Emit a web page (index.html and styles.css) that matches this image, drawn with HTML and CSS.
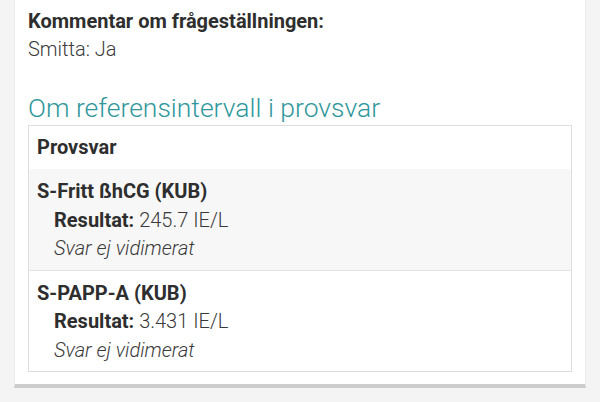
FILE: index.html
```html
<!DOCTYPE html>
<html lang="sv">
<head>
  <meta charset="UTF-8">
  <title>Provsvar</title>
  <link rel="stylesheet" href="styles.css">
</head>
<body>

  <div class="kort">
    <div class="kommentar">
      <div class="rubrik">Kommentar om frågeställningen:</div>
      <div class="text">Smitta: Ja</div>
    </div>

    <h2>Om referensintervall i provsvar</h2>

    <div class="tabell">
      <div class="huvud">Provsvar</div>

      <div class="rad udda">
        <div class="namn">S-Fritt ßhCG (KUB)</div>
        <div class="varde"><b>Resultat:</b> 245.7 IE/L</div>
        <div class="status">Svar ej vidimerat</div>
      </div>

      <div class="rad">
        <div class="namn">S-PAPP-A (KUB)</div>
        <div class="varde"><b>Resultat:</b> 3.431 IE/L</div>
        <div class="status">Svar ej vidimerat</div>
      </div>
    </div>
  </div>

</body>
</html>
```

FILE: styles.css
```css
body {
  font-family: Roboto, 'Noto Sans', sans-serif;
  background: #f4f4f4;
  margin: 0;
  padding: 0;
  color: #333;
}

.kort {
  margin: 0 14px;
  background-color: #ffffff;
  padding: 7px 13px 12px 13px;
  border-left: 1px solid #ececec;
  border-right: 1px solid #ececec;
  border-bottom: 4px solid #cdcdcd;
}

.kommentar {
  font-size: 20px;
  line-height: 28px;
}

.rubrik {
  font-weight: 700;
  color: #2e2e2e;
}

.text {
  font-weight: 300;
  color: #3a3a3a;
}

h2 {
  margin: 28px 0 1px 0;
  font-size: 26.5px;
  line-height: 33px;
  font-weight: 300;
  color: #2f979c;
}

.tabell {
  border: 1px solid #dedede;
  font-size: 20px;
  line-height: 28.5px;
}

.huvud {
  padding: 7px 8px 8px 8px;
  line-height: 28px;
  font-weight: 700;
  color: #2e2e2e;
}

.rad {
  padding: 8px 8px 7px 8px;
}

.udda {
  background-color: #f7f7f7;
  border-bottom: 1px solid #e2e2e2;
}

.namn {
  font-weight: 700;
  color: #2e2e2e;
}

.varde,
.status {
  padding-left: 17px;
  font-weight: 300;
  color: #3a3a3a;
}

.varde b {
  font-weight: 700;
  color: #2e2e2e;
}

.status {
  font-style: italic;
}
```
